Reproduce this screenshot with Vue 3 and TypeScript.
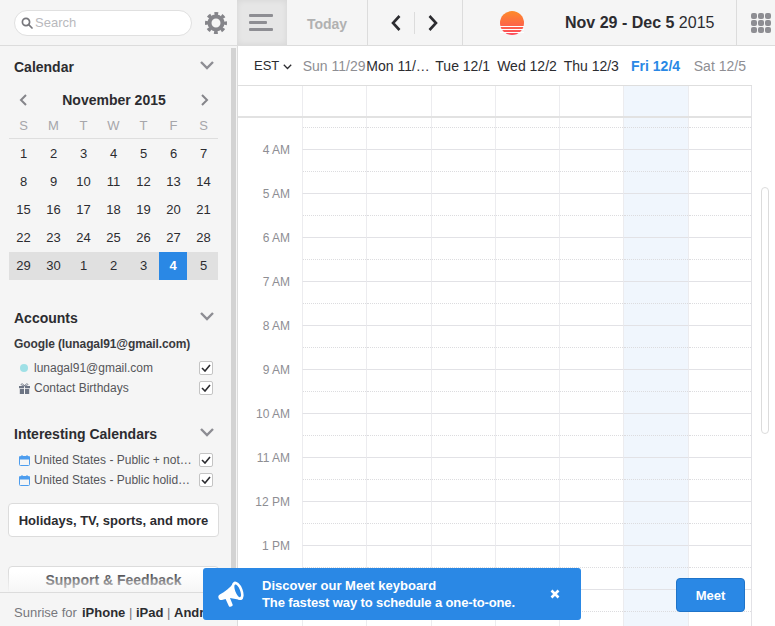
<script setup lang="ts">
const letters: string[] = ['S', 'M', 'T', 'W', 'T', 'F', 'S']
const weeks: number[][] = [
  [1, 2, 3, 4, 5, 6, 7],
  [8, 9, 10, 11, 12, 13, 14],
  [15, 16, 17, 18, 19, 20, 21],
  [22, 23, 24, 25, 26, 27, 28],
  [29, 30, 1, 2, 3, 4, 5],
]
const days = [
  { label: 'Sun 11/29', kind: 'off' },
  { label: 'Mon 11/30', kind: '' },
  { label: 'Tue 12/1', kind: '' },
  { label: 'Wed 12/2', kind: '' },
  { label: 'Thu 12/3', kind: '' },
  { label: 'Fri 12/4', kind: 'now' },
  { label: 'Sat 12/5', kind: 'off' },
]
const hours: string[] = ['4 AM', '5 AM', '6 AM', '7 AM', '8 AM', '9 AM', '10 AM', '11 AM', '12 PM', '1 PM', '', '']
const columns: number[] = [0, 1, 2, 3, 4, 5, 6]
const interesting: string[] = ['United States - Public + notable holidays', 'United States - Public holidays']
</script>

<template>
  <div class="app">
    <header class="topbar">
      <div class="top-left">
        <label class="search">
          <svg width="12" height="12" viewBox="0 0 12 12" fill="none" stroke="#77777c" stroke-width="1.7">
            <circle cx="5" cy="5" r="3.6" />
            <path d="M7.7 7.7 11 11" stroke-linecap="round" />
          </svg>
          <span>Search</span>
        </label>
        <svg class="gear" width="22" height="22" viewBox="0 0 22 22" fill="none" stroke="#85858a">
          <circle cx="11" cy="11" r="6.500" stroke-width="4" />
          <circle cx="11" cy="11" r="9.500" stroke-width="3" stroke-dasharray="3.800 3.660" stroke-dashoffset="1.900" />
        </svg>
      </div>
      <button class="menu" type="button" aria-label="Menu">
        <i class="bar" /><i class="bar short" /><i class="bar" />
      </button>
      <div class="today">Today</div>
      <div class="arrows">
        <svg width="12" height="18" viewBox="0 0 12 18" fill="none" stroke="#2c2c30" stroke-width="2.6">
          <path d="M9.5 2 3 9l6.5 7" />
        </svg>
        <i class="arrow-sep" />
        <svg width="12" height="18" viewBox="0 0 12 18" fill="none" stroke="#2c2c30" stroke-width="2.6">
          <path d="M2.5 2 9 9l-6.5 7" />
        </svg>
      </div>
      <div class="brand">
        <svg class="logo" width="24" height="24" viewBox="0 0 24 24">
          <defs>
            <linearGradient id="sun" x1="0" y1="0" x2="0" y2="1">
              <stop offset="0" stop-color="#fd8b2a" />
              <stop offset="1" stop-color="#fd4a5c" />
            </linearGradient>
          </defs>
          <circle cx="12" cy="12" r="12" fill="url(#sun)" />
          <rect x="0" y="15" width="24" height="1" fill="#fff" />
          <rect x="0" y="18" width="24" height="1" fill="#fff" />
          <rect x="0" y="21" width="24" height="1" fill="#fff" />
        </svg>
        <div class="range"><b>Nov 29 - Dec 5</b> 2015</div>
      </div>
      <div class="apps">
        <i v-for="n in 9" :key="n" />
      </div>
    </header>

    <div class="body">
      <aside class="sidebar">
        <div class="side-scroll">
          <section class="sec-cal">
            <div class="sec-title">
              <h2>Calendar</h2>
              <svg class="chev" width="14" height="9" viewBox="0 0 14 9" fill="none" stroke="#8d8d93" stroke-width="2.4"><path d="M1 1l6 6 6-6" /></svg>
            </div>
            <div class="month">
              <svg width="9" height="12" viewBox="0 0 9 12" fill="none" stroke="#85858a" stroke-width="2"><path d="M7 1 2 6l5 5" /></svg>
              <strong>November 2015</strong>
              <svg width="9" height="12" viewBox="0 0 9 12" fill="none" stroke="#85858a" stroke-width="2"><path d="M2 1l5 5-5 5" /></svg>
            </div>
            <div class="letters">
              <span v-for="(l, i) in letters" :key="i">{{ l }}</span>
            </div>
            <div v-for="(w, wi) in weeks" :key="wi" class="week" :class="{ current: wi === 4 }">
              <span v-for="(d, di) in w" :key="di" :class="{ picked: wi === 4 && di === 5 }">{{ d }}</span>
            </div>
          </section>

          <section class="sec-acc">
            <div class="sec-title">
              <h2>Accounts</h2>
              <svg class="chev" width="14" height="9" viewBox="0 0 14 9" fill="none" stroke="#8d8d93" stroke-width="2.4"><path d="M1 1l6 6 6-6" /></svg>
            </div>
            <div class="account">Google (lunagal91@gmail.com)</div>
            <div class="row first">
              <span class="ico"><i class="dot" /></span>
              <span class="name">lunagal91@gmail.com</span>
              <span class="check"><svg width="10" height="8" viewBox="0 0 10 8" fill="none" stroke="#2c2c30" stroke-width="1.6"><path d="M1 4l3 3 5-6" /></svg></span>
            </div>
            <div class="row">
              <span class="ico">
                <svg width="11" height="11" viewBox="0 0 11 11" fill="#6d7584">
                  <path d="M0 3h5v2.300H0zM6 3h5v2.300H6zM.8 6h4.200v5H.8zM6 6h4.200v5H6z" />
                  <path d="M5.500 2.900C4 .2 1.800.4 2.300 1.800c.3.8 2 1.100 3.200 1.100zm0 0C7 .2 9.200.4 8.700 1.800c-.3.8-2 1.100-3.200 1.100z" fill="none" stroke="#6d7584" stroke-width=".9" />
                </svg>
              </span>
              <span class="name">Contact Birthdays</span>
              <span class="check"><svg width="10" height="8" viewBox="0 0 10 8" fill="none" stroke="#2c2c30" stroke-width="1.6"><path d="M1 4l3 3 5-6" /></svg></span>
            </div>
          </section>

          <section class="sec-int">
            <div class="sec-title">
              <h2>Interesting Calendars</h2>
              <svg class="chev" width="14" height="9" viewBox="0 0 14 9" fill="none" stroke="#8d8d93" stroke-width="2.4"><path d="M1 1l6 6 6-6" /></svg>
            </div>
            <div v-for="(c, i) in interesting" :key="i" class="row" :class="{ first2: i === 0 }">
              <span class="ico">
                <svg width="11" height="11" viewBox="0 0 11 11">
                  <rect x=".5" y="1.500" width="10" height="9" rx="1" fill="none" stroke="#4d9dee" />
                  <rect x="0" y="1.500" width="11" height="3" fill="#4d9dee" />
                  <path d="M3 0v2M8 0v2" stroke="#4d9dee" />
                </svg>
              </span>
              <span class="name">{{ c }}</span>
              <span class="check"><svg width="10" height="8" viewBox="0 0 10 8" fill="none" stroke="#2c2c30" stroke-width="1.6"><path d="M1 4l3 3 5-6" /></svg></span>
            </div>
            <button class="wide holidays" type="button">Holidays, TV, sports, and more</button>
            <button class="wide support" type="button">Support &amp; Feedback</button>
          </section>
        </div>
        <footer class="side-foot">
          Sunrise for <b class="lead-link">iPhone</b> | <b>iPad</b> | <b>Android</b>
        </footer>
        <i class="side-fade" />
        <i class="side-thumb" />
      </aside>

      <main class="main">
        <div class="day-head">
          <div class="tz">EST <svg width="9" height="6" viewBox="0 0 9 6" fill="none" stroke="#2c2c30" stroke-width="1.300"><path d="M.8.8 4.500 4.500 8.200.8" /></svg></div>
          <div v-for="d in days" :key="d.label" class="day" :class="d.kind">{{ d.label }}</div>
        </div>
        <div class="allday">
          <i class="spacer" />
          <i v-for="c in columns" :key="c" class="cell" :class="{ hi: c === 5 }" />
        </div>
        <div class="hours">
          <div v-for="(h, i) in hours" :key="i" class="hour" :class="{ lead: i === 0 }">
            <span class="time">{{ h }}</span>
            <i v-for="c in columns" :key="c" class="slot" :class="{ hi: c === 5 }" />
          </div>
        </div>
      </main>
    </div>

    <div class="toast">
      <svg class="horn" width="27" height="26" viewBox="0 0 27 26">
        <path fill="#fff" d="M15.500 2 23 19 12 17l2.600 6.500c.3.900-.1 1.500-.9 1.800l-1.300.5c-.7.200-1.300 0-1.600-.8L7.600 18 4 19c-1.500.4-2.800-.3-3.400-1.800s-.2-2.800 1.200-3.700C7 10.500 12 7 15.500 2z" />
        <ellipse cx="19.700" cy="9.800" rx="5" ry="9.800" transform="rotate(-22 19.700 9.800)" fill="#fff" />
        <ellipse cx="19.700" cy="9.800" rx="2.400" ry="6.800" transform="rotate(-22 19.700 9.800)" fill="#2a88e5" />
      </svg>
      <div class="toast-text">
        <b>Discover our Meet keyboard</b>
        <span>The fastest way to schedule a one-to-one.</span>
      </div>
      <svg class="close" width="10" height="10" viewBox="0 0 10 10" fill="none" stroke="#fff" stroke-width="2.600"><path d="M1.500 1.500l7 7M8.500 1.500l-7 7" /></svg>
    </div>
    <button class="meet" type="button">Meet</button>
    <i class="main-thumb" />
  </div>
</template>

<style>
html, body { margin: 0; padding: 0; background: #fff; }
</style>

<style scoped>
.app {
  position: relative;
  width: 775px;
  height: 626px;
  overflow: hidden;
  display: flex;
  flex-direction: column;
  font-family: "Liberation Sans", Arial, sans-serif;
  color: #2c2c30;
  background: #fff;
}
i { display: block; font-style: normal; }

.topbar {
  height: 46px;
  flex: none;
  box-sizing: border-box;
  display: flex;
  background: #f5f5f5;
  border-bottom: 1px solid #dcdcdc;
}
.top-left {
  width: 237px;
  flex: none;
  display: flex;
  align-items: center;
  padding-left: 14px;
  box-sizing: border-box;
}
.search {
  width: 178px;
  height: 26px;
  box-sizing: border-box;
  border: 1px solid #e0e0e0;
  border-radius: 13px;
  background: #fff;
  display: flex;
  align-items: center;
  gap: 2px;
  padding-left: 6px;
  font-size: 13px;
  color: #b9b9bd;
}
.gear { margin-left: 13px; }
.menu {
  width: 50px;
  flex: none;
  padding: 0 0 0 12px;
  border: 0;
  background: #e6e6e6;
  box-shadow: inset 0 0 6px rgba(0, 0, 0, .08);
  display: flex;
  flex-direction: column;
  justify-content: center;
  align-items: flex-start;
  gap: 4px;
}
.bar { width: 24px; height: 3px; border-radius: 1px; background: #8e8e93; }
.bar.short { width: 18px; }
.today {
  width: 81px;
  flex: none;
  box-sizing: border-box;
  border-right: 1px solid #dcdcdc;
  display: flex;
  align-items: center;
  justify-content: center;
  padding-top: 2px;
  font-size: 14px;
  font-weight: 700;
  color: #b1b1b1;
}
.arrows {
  width: 95px;
  flex: none;
  box-sizing: border-box;
  border-right: 1px solid #dcdcdc;
  padding-right: 2px;
  display: flex;
  align-items: center;
  justify-content: center;
  gap: 12px;
}
.arrow-sep { width: 1px; height: 22px; background: #dcdcdc; }
.brand {
  width: 274px;
  flex: none;
  box-sizing: border-box;
  border-right: 1px solid #dcdcdc;
  display: flex;
  align-items: center;
  padding-left: 37px;
}
.range { margin-left: 41px; font-size: 16px; white-space: nowrap; }
.apps {
  flex: 1;
  display: grid;
  grid-template-columns: repeat(3, 6px);
  grid-auto-rows: 6px;
  gap: 1px;
  align-content: center;
  padding-left: 14px;
}
.apps i { background: #8e8e93; border-radius: 2px; }

.body { flex: 1; min-height: 0; display: flex; }
.sidebar {
  position: relative;
  width: 237px;
  flex: none;
  box-sizing: content-box;
  border-right: 1px solid #dcdcdc;
  background: #f5f5f5;
  display: flex;
  flex-direction: column;
}
.side-scroll { flex: 1; min-height: 0; overflow: hidden; }
.side-fade {
  position: absolute;
  left: 0;
  width: 231px;
  bottom: 34px;
  height: 20px;
  background: linear-gradient(to bottom, rgba(245, 245, 245, 0), rgba(245, 245, 245, .9));
}
.side-thumb {
  position: absolute;
  left: 231px;
  top: 2px;
  bottom: 34px;
  width: 5px;
  background: #d3d3d3;
}
.sec-cal { padding: 12px 0 0; }
.sec-title {
  display: flex;
  align-items: center;
  justify-content: space-between;
  padding: 0 23px 0 14px;
  height: 18px;
}
h2 { margin: 0; font-size: 14px; font-weight: 700; color: #2c2c30; }
.chev { margin-top: -3px; }
.month {
  margin: 15px 0 0 0;
  padding: 0 28px 0 19px;
  display: flex;
  align-items: center;
  justify-content: space-between;
  height: 18px;
}
.month strong { font-size: 14px; }
.letters, .week {
  width: 209px;
  margin-left: 9px;
  display: grid;
  grid-template-columns: repeat(7, 30px);
  text-align: center;
}
.letters span, .week span { padding-right: 1px; }
.letters {
  height: 21px;
  margin-top: 9px;
  margin-bottom: 1px;
  box-sizing: border-box;
  border-bottom: 1px solid #dedede;
  font-size: 13px;
  line-height: 16px;
  color: #a6a6aa;
}
.week { height: 28px; font-size: 13px; line-height: 28px; }
.week.current { background: #e0e0e0; }
.week .picked {
  padding-right: 0;
  margin-right: 2px;
  background: #2a88e5;
  color: #fff;
  font-weight: 700;
}
.sec-acc { padding-top: 29px; }
.account {
  margin: 9px 0 0 14px;
  font-size: 12px;
  letter-spacing: -.1px;
  font-weight: 700;
  line-height: 16px;
  color: #3a3a3e;
}
.row {
  height: 20px;
  display: flex;
  align-items: center;
  padding: 0 24px 0 19px;
  font-size: 12px;
  color: #55555a;
}
.row.first { margin-top: 6px; }
.row.first2 { margin-top: 7px; }
.ico { width: 15px; flex: none; display: flex; align-items: center; }
.dot { width: 8px; height: 8px; border-radius: 50%; background: #9fe0e6; margin-left: 1px; }
.name { flex: 1; min-width: 0; overflow: hidden; white-space: nowrap; text-overflow: ellipsis; }
.check {
  width: 14px;
  height: 14px;
  flex: none;
  margin-left: 4px;
  box-sizing: border-box;
  border: 1px solid #c4c4c4;
  border-radius: 2px;
  background: #fff;
  display: flex;
  align-items: center;
  justify-content: center;
}
.sec-int { padding-top: 27px; }
.wide {
  display: block;
  width: 211px;
  height: 34px;
  margin-left: 8px;
  padding: 0;
  box-sizing: border-box;
  border: 1px solid #dcdcdc;
  border-radius: 4px;
  background: #fff;
  font-family: inherit;
  font-size: 13px;
  font-weight: 700;
  color: #2c2c30;
}
.holidays { margin-top: 13px; }
.support { height: 28px; margin-top: 29px; color: #3a3a3e; font-size: 14px; }
.side-foot {
  position: relative;
  height: 34px;
  flex: none;
  box-sizing: border-box;
  border-top: 1px solid #dcdcdc;
  background: #f5f5f5;
  padding-left: 14px;
  font-size: 13px;
  line-height: 39px;
  color: #77777c;
  white-space: nowrap;
  overflow: hidden;
}
.side-foot b { color: #2c2c30; }
.side-foot .lead-link { margin-left: 1.500px; }

.main { flex: 1; min-width: 0; display: flex; flex-direction: column; }
.day-head {
  width: 514px;
  height: 40px;
  flex: none;
  box-sizing: border-box;
  border-bottom: 1px solid #dedede;
  display: grid;
  grid-template-columns: 64px repeat(7, 1fr);
  align-items: center;
  font-size: 14px;
}
.tz { padding-left: 16px; font-size: 13px; white-space: nowrap; }
.day {
  min-width: 0;
  overflow: hidden;
  white-space: nowrap;
  text-overflow: ellipsis;
  text-align: center;
}
.day.off { color: #8e8e93; }
.day.now { color: #2a88e5; font-weight: 700; }
.allday {
  width: 514px;
  height: 32px;
  flex: none;
  box-sizing: border-box;
  border-bottom: 2px solid #e2e2e2;
  display: grid;
  grid-template-columns: 64px repeat(7, 1fr);
}
.cell, .slot { border-left: 1px solid #ececef; }
.cell:last-child, .slot:last-child { border-right: 1px solid #e2e2e6; }
.hi { background: #f0f6fd; }
.hours { flex: 1; min-height: 0; width: 514px; overflow: hidden; }
.hour {
  height: 44px;
  display: grid;
  grid-template-columns: 64px repeat(7, 1fr);
}
.hour.lead { height: 32px; }
.time {
  align-self: end;
  transform: translateY(50%);
  padding-right: 12px;
  text-align: right;
  font-size: 12px;
  line-height: 14px;
  color: #8e8e93;
  position: relative;
  z-index: 1;
}
.slot {
  position: relative;
  box-sizing: border-box;
  border-bottom: 1px solid #e2e2e6;
}
.slot::before {
  content: "";
  position: absolute;
  left: 0;
  right: 0;
  top: 21px;
  border-top: 1px dotted #dcdcdf;
}
.hour.lead .slot::before { top: 9px; }

.toast {
  position: absolute;
  left: 203px;
  top: 568px;
  width: 378px;
  height: 52px;
  box-sizing: border-box;
  border-radius: 3px;
  background: #2a88e5;
  color: #fff;
  display: flex;
  align-items: center;
  padding: 0 21px 0 15px;
}
.toast-text {
  margin-left: 17px;
  display: flex;
  flex-direction: column;
  gap: 2px;
  font-size: 13px;
  line-height: 15px;
  font-weight: 700;
}
.toast-text span { letter-spacing: -.12px; }
.close { margin-left: auto; }
.meet {
  position: absolute;
  left: 676px;
  top: 578px;
  width: 69px;
  height: 34px;
  padding: 0;
  border: 1px solid #1f74c9;
  border-radius: 4px;
  background: #2a88e5;
  color: #fff;
  font-family: inherit;
  font-size: 13px;
  font-weight: 700;
}
.main-thumb {
  position: absolute;
  left: 761px;
  top: 187px;
  width: 8px;
  height: 247px;
  box-sizing: border-box;
  border: 1px solid #dcdcdc;
  border-radius: 4px;
  background: #fff;
}
</style>
